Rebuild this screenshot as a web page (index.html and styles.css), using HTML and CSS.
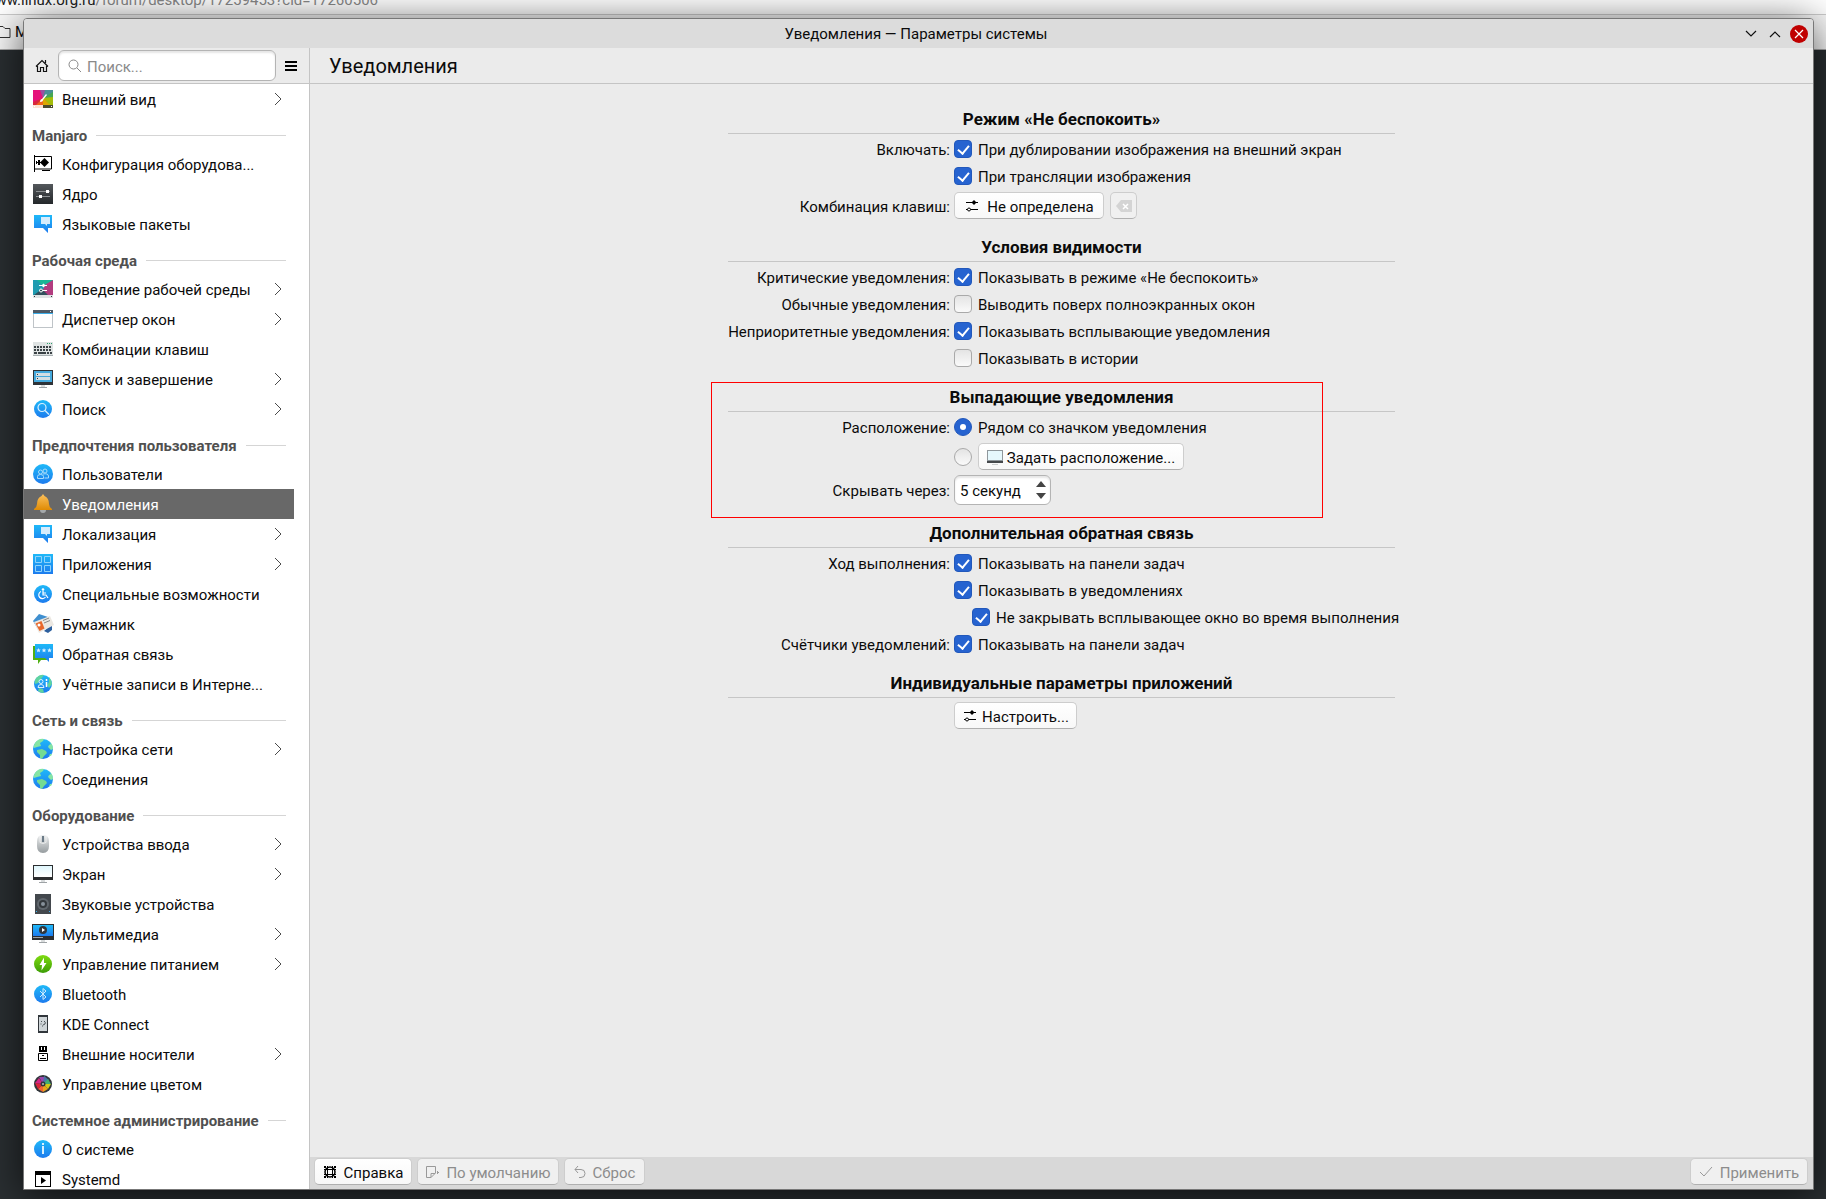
FILE: index.html
```html
<!DOCTYPE html>
<html lang="ru">
<head>
  <meta charset="utf-8">
  <title>Уведомления — Параметры системы</title>
  <meta name="viewport" content="width=device-width, initial-scale=1.0">
  <link rel="stylesheet" href="styles.css">
</head>
<body>

<!-- icon set -->
<svg class="sprite" aria-hidden="true">
  <defs>
    <linearGradient id="gBlue" x1="0" y1="0" x2="0" y2="1"><stop offset="0" stop-color="#1fb9f8"/><stop offset="1" stop-color="#1d7bee"/></linearGradient>
    <linearGradient id="gGreen" x1="0" y1="0" x2="0" y2="1"><stop offset="0" stop-color="#7fdc10"/><stop offset="1" stop-color="#3c9d07"/></linearGradient>
    <linearGradient id="gDark" x1="0" y1="0" x2="0" y2="1"><stop offset="0" stop-color="#54585c"/><stop offset="1" stop-color="#24282b"/></linearGradient>
    <linearGradient id="gBell" x1="0" y1="0" x2="0" y2="1"><stop offset="0" stop-color="#fbc05c"/><stop offset="1" stop-color="#e08b04"/></linearGradient>
    <linearGradient id="gGrey" x1="0" y1="0" x2="0" y2="1"><stop offset="0" stop-color="#eceeef"/><stop offset="1" stop-color="#969c9f"/></linearGradient>
    <linearGradient id="gScreen" x1="0" y1="0" x2="0" y2="1"><stop offset="0" stop-color="#dff6fc"/><stop offset="1" stop-color="#ffffff"/></linearGradient>
  </defs>
  <symbol id="i-look" viewBox="0 0 22 22">
    <path d="M1 2h20v15H1z" fill="#d8283c"/>
    <path d="M1 2h8l2 8L1 14z" fill="#e5127a"/>
    <path d="M8 2h6l-3 8z" fill="#9a4fa0"/>
    <path d="M13 2h8v3l-10 5z" fill="#4a8f96"/>
    <path d="M21 4v7l-10-1z" fill="#46a852"/>
    <path d="M21 9v8h-4l-6-7z" fill="#a4bd0a"/>
    <path d="M18 17h-8l1-7z" fill="#dca800"/>
    <path d="M11 17H4l7-7z" fill="#f0641c"/>
    <path d="M8 14c0-2 1-3 2-3l4-5 1 1-4 5c0 1-1 2-3 2z" fill="#fff"/>
    <path d="M1 17h10v3H1z" fill="#fbe3d3"/><path d="M11 17h10v3H11z" fill="#4a4b2e"/>
    <path d="M2 18h1v1H2zM19 18h1v1h-1z" fill="#fff"/>
  </symbol>
  <symbol id="i-hw" viewBox="0 0 22 22">
    <path d="M2.500 2v17M2 3.500h17.500v12.500H3M10 17.500h8" fill="none" stroke="#000"/>
    <path d="M4 9h6v1H4zM4 8h1v3H4zM6 7h2v5H6z"/>
    <path d="M8 9.500L12.500 5l4.500 4.500-4.500 4.500z"/>
  </symbol>
  <symbol id="i-kernel" viewBox="0 0 22 22">
    <path d="M1 1h20v20H1z" fill="url(#gDark)"/>
    <path d="M4 8.500h14M4 13.500h14" stroke="#8d9194"/>
    <path d="M14 7h3v3h-3zM7 12h3v3H7z" fill="#fff"/>
  </symbol>
  <symbol id="i-lang" viewBox="0 0 22 22">
    <path d="M2 2h18v13h-4v5l-5-5H2z" fill="url(#gBlue)"/>
    <path d="M9 4h9v7h-3v2l-2-2H9z" fill="#d6ecfc"/>
  </symbol>
  <symbol id="i-work" viewBox="0 0 22 22">
    <path d="M1 2h20v15H1z" fill="#1f9bb0"/><path d="M21 2v15H9l6-15z" fill="#b23c80"/>
    <path d="M5 2h16l-10 6z" fill="#1ab596"/><path d="M2 17l8-6 6 6z" fill="#32505c"/>
    <path d="M1 17h20v3H1z" fill="#dfe3e4"/><path d="M2 18h1v1H2zM19 18h1v1h-1z" fill="#31363b"/>
    <path d="M7 7.500h8M7 12.500h8" stroke="#fff"/><path d="M11.500 5.500l2 2-2 2-2-2z" fill="#fff"/><circle cx="9" cy="12.500" r="1.500" fill="#32505c" stroke="#fff"/>
  </symbol>
  <symbol id="i-win" viewBox="0 0 22 22">
    <path d="M1 2h20v18H1z" fill="#bfc4c8"/><path d="M2 5h18v14H2z" fill="#fff"/>
    <path d="M1 2h20v3H1z" fill="#4e5a66"/><path d="M1 5h20v1H1z" fill="#3daee9"/><path d="M18 3h1v1h-1z" fill="#fff"/>
  </symbol>
  <symbol id="i-keys" viewBox="0 0 22 22">
    <path d="M1 4h20v14H1z" fill="#dfe3e3"/>
    <path d="M2 9h18M2 12h18" stroke="#3b4246" stroke-width="2" stroke-dasharray="2 1"/>
    <path d="M2 15h18" stroke="#3b4246" stroke-width="2" stroke-dasharray="3 1 8 1 2 1"/>
    <path d="M15 5h1v1h-1zM17 5h1v1h-1zM19 5h1v1h-1z" fill="#2ea36c"/><path d="M1 17h20v1H1z" fill="#a9b0b2"/>
  </symbol>
  <symbol id="i-boot" viewBox="0 0 22 22">
    <path d="M1 2h20v15H1z" fill="#2e3338"/><path d="M2 3h18v11H2z" fill="#44a9dd"/>
    <path d="M4 5h14v3H4zM4 9h14v3H4z" fill="#d4dee3"/><path d="M5 6h1v1H5zM5 10h1v1H5z" fill="#2e3338"/>
    <path d="M9 17h4v2H9z" fill="#d9dcdd"/><path d="M7 19h8v1H7z" fill="#9ea3a6"/>
  </symbol>
  <symbol id="i-search" viewBox="0 0 22 22">
    <circle cx="11" cy="11" r="9" fill="url(#gBlue)"/>
    <circle cx="10" cy="9.500" r="4" fill="none" stroke="#d9f0fe" stroke-width="1.200"/><path d="M13 12.500l4 4" stroke="#d9f0fe" stroke-width="1.200"/>
  </symbol>
  <symbol id="i-users" viewBox="0 0 22 22">
    <circle cx="11" cy="11" r="10" fill="url(#gBlue)"/>
    <g fill="none" stroke="#a9dcfb"><circle cx="13" cy="8" r="2"/><circle cx="8.500" cy="9" r="2"/><path d="M5.500 15.500v-2q0-2 3-2t3 2v2zM11 11q5-1 5.500 2v2h-4"/></g>
  </symbol>
  <symbol id="i-bell" viewBox="0 0 22 22">
    <path d="M8 17h6q0 3-3 3t-3-3z" fill="#a5a9ab"/>
    <path d="M11 1l1.500 2Q17 5 17 11q0 3 3 5v1H2v-1q3-2 3-5 0-6 4.500-8z" fill="url(#gBell)"/>
  </symbol>
  <symbol id="i-apps" viewBox="0 0 22 22">
    <path d="M1 1h20v20H1z" fill="url(#gBlue)"/>
    <path d="M3.500 3.500h6v6h-6zM12.500 3.500h6v6h-6zM3.500 12.500h6v6h-6zM12.500 12.500h6v6h-6z" fill="none" stroke="#8fd3fb"/>
  </symbol>
  <symbol id="i-access" viewBox="0 0 22 22">
    <circle cx="11" cy="11" r="9" fill="url(#gBlue)"/>
    <circle cx="11" cy="6.500" r="1.300" fill="#fff"/>
    <path d="M11 8v4h3l2 3M11 10h3M9 8.500a3.700 3.700 0 1 0 4.500 5.500" fill="none" stroke="#fff" stroke-width="1.200"/>
  </symbol>
  <symbol id="i-wallet" viewBox="0 0 22 22">
    <path d="M1 8l6-7 9 3-9 14z" fill="#3f8fd0"/><path d="M12 18l8-7v6l-4 3z" fill="#2c5f9e"/>
    <path d="M2 9l16-6 4 9-15 8z" fill="#ece8e2"/><path d="M3.500 10.500l6-2.500 3 7.500-5 2.500z" fill="#e8682c"/>
    <circle cx="7" cy="12" r="1.500" fill="#fff"/><path d="M11 7.500l6-2.500M12 10l6-2.500" stroke="#888"/>
  </symbol>
  <symbol id="i-feedback" viewBox="0 0 22 22">
    <path d="M1 3h16v14H9l-3 4v-4H1z" fill="#4fb012"/>
    <path d="M3 1h18v14h-4v4l-4-4H3z" fill="url(#gBlue)"/>
    <path d="M6.500 5l.7 1.500 1.500.1-1.100 1.100.4 1.600-1.500-.8-1.500.8.4-1.600-1.100-1.100 1.500-.1zM12 5l.7 1.500 1.500.1-1.100 1.100.4 1.600-1.500-.8-1.500.8.4-1.600-1.100-1.100 1.500-.1zM17.500 5l.7 1.500 1.500.1-1.100 1.100.4 1.600-1.500-.8-1.500.8.4-1.600-1.100-1.100 1.500-.1z" fill="#d9f0fe"/>
  </symbol>
  <symbol id="i-accounts" viewBox="0 0 22 22">
    <circle cx="11" cy="11" r="9" fill="url(#gBlue)"/>
    <path d="M4 5q4-4 8-3l-3 4-3 4-3 1q-1-3 1-6zM17 4q3 3 3 7l-3 4-2-3 2-3zM7 15l4 1 1 4q-4 0-6-2z" fill="#5fd3a0"/>
    <circle cx="9" cy="8.500" r="2" fill="none" stroke="#d9f0fe"/><path d="M6 14.500q0-3 3-3t3 3z" fill="none" stroke="#d9f0fe"/><path d="M14.500 6v2M14.500 9v5" stroke="#fff" stroke-width="1.500"/>
  </symbol>
  <symbol id="i-globe" viewBox="0 0 22 22">
    <circle cx="11" cy="11" r="10" fill="url(#gBlue)"/>
    <path d="M3 5q4-5 9-4l-1 2-3 2 1 3-4 1-3 1q-1-2 1-5z" fill="#86e5a4"/>
    <path d="M5 12l5-1 4 2 1 2-3 3-2 3-2-1v-3l-3-3z" fill="#74dc93"/>
    <path d="M17 3q4 3 4 8l-2 1-3-3 1-2 2-1zM17 18l1-2 2 0-1 2z" fill="#86e5a4"/>
  </symbol>
  <symbol id="i-mouse" viewBox="0 0 22 22">
    <path d="M11 2q6 0 6 6v5q0 7-6 7t-6-7V8q0-6 6-6z" fill="url(#gGrey)"/>
    <path d="M8 2.500v7q3 2 6 0v-7" fill="none" stroke="#fafafa" stroke-width=".7"/><path d="M10 3h2v6h-2z" fill="#6b7a86"/>
  </symbol>
  <symbol id="i-screen" viewBox="0 0 22 22">
    <path d="M1 2h20v15H1z" fill="#2c2e30"/><path d="M2 3h18v11H2z" fill="url(#gScreen)"/>
    <path d="M9 17h4v2H9z" fill="#d9dcdd"/><path d="M7 19h8v1H7z" fill="#9ea3a6"/>
  </symbol>
  <symbol id="i-place" viewBox="0 0 16 16">
    <path d="M0 1h16v13H0z" fill="#8f979c"/><path d="M1 2h14v9H1z" fill="#e6f8fd"/><path d="M0 12h16v2H0z" fill="#44484b"/><path d="M5 15h6v1H5z" fill="#c9cccd"/>
  </symbol>
  <symbol id="i-sound" viewBox="0 0 22 22">
    <path d="M3 1h16v20H3z" fill="#43484d"/><path d="M4 18h1v1H4zM17 18h1v1h-1z" fill="#3daee9"/>
    <circle cx="11" cy="11" r="6" fill="#60676d"/><circle cx="11" cy="11" r="4" fill="#33383c"/><circle cx="11" cy="11" r="2" fill="#87919a"/>
  </symbol>
  <symbol id="i-media" viewBox="0 0 22 22">
    <path d="M0 1h22v16H0z" fill="#2c2e30"/><path d="M1 2h20v11H1z" fill="url(#gBlue)"/>
    <circle cx="11" cy="7" r="4" fill="#31363b"/><path d="M10 5v4l3-2z" fill="#fff"/><path d="M1 14h10v1H1z" fill="#9ea3a6"/>
    <path d="M9 17h4v2H9z" fill="#d9dcdd"/><path d="M7 19h8v1H7z" fill="#9ea3a6"/>
  </symbol>
  <symbol id="i-power" viewBox="0 0 22 22">
    <circle cx="11" cy="11" r="9" fill="url(#gGreen)"/><path d="M12 4.500L7.500 12H10l-.5 5.500L14.500 10H12z" fill="#fff"/>
  </symbol>
  <symbol id="i-bt" viewBox="0 0 22 22">
    <circle cx="11" cy="11" r="9" fill="url(#gBlue)"/><path d="M8 8l6 6-3 2.500v-11L14 8l-6 6" fill="none" stroke="#cfeafd"/>
  </symbol>
  <symbol id="i-phone" viewBox="0 0 22 22">
    <path d="M6 2h10v18H6z" fill="#31363b"/><path d="M7 4h8v14H7z" fill="#cfd5d8"/>
    <path d="M9 8.500h1M8.500 11h1M12 8q2 1 1 3l-2 1M10 13h1" fill="none" stroke="#4d5458"/>
  </symbol>
  <symbol id="i-usb" viewBox="0 0 22 22">
    <path d="M7 3h8v6H7z"/><path d="M9 4h1v3H9zM12 4h1v3h-1z" fill="#fff"/>
    <path d="M6.500 10.500h9v7h-9z" fill="#fff" stroke="#000"/><path d="M8 15h6v1H8zM10 12h2v1h-2z"/>
  </symbol>
  <symbol id="i-color" viewBox="0 0 22 22">
    <circle cx="11" cy="11" r="9" fill="#31363b"/>
    <path d="M11 11L7 4h6z" fill="#9b45ad"/><path d="M11 11l1-8 5 4z" fill="#4a73a8"/><path d="M11 11l5-5 3 5z" fill="#3fae70"/>
    <path d="M11 11h8l-3 5z" fill="#d0c818"/><path d="M11 11l5 5-5 3z" fill="#eaa31c"/><path d="M11 11v8l-5-3z" fill="#f06432"/><path d="M11 11l-5 5-3-6z" fill="#dc2339"/><path d="M11 11l-8-1 4-5z" fill="#d52684"/>
    <circle cx="11" cy="11" r="2.500" fill="#31363b"/><circle cx="11" cy="11" r="1" fill="#bbb"/>
  </symbol>
  <symbol id="i-info" viewBox="0 0 22 22">
    <circle cx="11" cy="11" r="9" fill="url(#gBlue)"/><path d="M10 5h2v2h-2zM10 8h2v8h-2z" fill="#d9f0fe"/>
  </symbol>
  <symbol id="i-systemd" viewBox="0 0 22 22">
    <path d="M3 3h16v16H3z"/><path d="M4 7h14v11H4z" fill="#fff"/><path d="M9 9v7l5-3.500z"/>
  </symbol>
  <symbol id="i-chev" viewBox="0 0 8 14"><path d="M1 1l6 6-6 6" fill="none" stroke="#4a4a4a"/></symbol>
  <symbol id="i-conf" viewBox="0 0 16 16">
    <path d="M2 4.500h12M2 11.500h12" stroke="#000"/><path d="M10 2l2.500 2.500L10 7 7.500 4.500z"/><circle cx="5" cy="11.500" r="1.500" fill="#fff" stroke="#000"/>
  </symbol>
</svg>

<!-- browser behind the window -->
<div class="backdrop" aria-hidden="true">
  <div class="url"><span>www.linux.org.ru<i>/forum/desktop/17259453?cid=17260506</i></span></div>
  <div class="bookmarks">
    <svg width="11" height="16" viewBox="0 0 11 16"><path d="M0 2.500h3l2 2h5v9H0" fill="none" stroke="#333"/></svg>
    <span>M</span>
  </div>
</div>

<div class="window">
  <header class="titlebar">
    <h1>Уведомления — Параметры системы</h1>
    <div class="wm">
      <button type="button" aria-label="Свернуть"><svg width="12" height="8" viewBox="0 0 12 8"><path d="M1 1l5 5 5-5" fill="none" stroke="#111" stroke-width="1.200"/></svg></button>
      <button type="button" aria-label="Развернуть"><svg width="12" height="8" viewBox="0 0 12 8"><path d="M1 7l5-5 5 5" fill="none" stroke="#111" stroke-width="1.200"/></svg></button>
      <button type="button" class="close" aria-label="Закрыть"><svg width="18" height="18" viewBox="0 0 18 18"><path d="M5 5l8 8M13 5l-8 8" stroke="#fff" stroke-width="1.200"/></svg></button>
    </div>
  </header>

  <div class="content">
    <aside class="sidebar">
      <div class="tools">
        <button type="button" class="flat" aria-label="Домой"><svg width="14" height="14" viewBox="0 0 14 14"><path d="M1 7.500l6-6 6 6M2.500 7v5.500h3v-4h3v4h3V7M10.500 1v3" fill="none" stroke="#111" stroke-width="1.200"/></svg></button>
        <label class="search">
          <svg width="14" height="14" viewBox="0 0 14 14"><circle cx="5.500" cy="5.500" r="4.500" fill="none" stroke="#888"/><path d="M9 9l4 4" stroke="#888"/></svg>
          <input type="search" placeholder="Поиск..." aria-label="Поиск">
        </label>
        <button type="button" class="flat" aria-label="Меню"><svg width="12" height="12" viewBox="0 0 12 12"><path d="M0 2h12M0 6h12M0 10h12" stroke="#000" stroke-width="2"/></svg></button>
      </div>

      <nav>
        <a class="item" href="#"><svg><use href="#i-look"/></svg><span>Внешний вид</span><svg class="chev"><use href="#i-chev"/></svg></a>

        <h2>Manjaro</h2>
        <a class="item" href="#"><svg><use href="#i-hw"/></svg><span>Конфигурация оборудова...</span></a>
        <a class="item" href="#"><svg><use href="#i-kernel"/></svg><span>Ядро</span></a>
        <a class="item" href="#"><svg><use href="#i-lang"/></svg><span>Языковые пакеты</span></a>

        <h2>Рабочая среда</h2>
        <a class="item" href="#"><svg><use href="#i-work"/></svg><span>Поведение рабочей среды</span><svg class="chev"><use href="#i-chev"/></svg></a>
        <a class="item" href="#"><svg><use href="#i-win"/></svg><span>Диспетчер окон</span><svg class="chev"><use href="#i-chev"/></svg></a>
        <a class="item" href="#"><svg><use href="#i-keys"/></svg><span>Комбинации клавиш</span></a>
        <a class="item" href="#"><svg><use href="#i-boot"/></svg><span>Запуск и завершение</span><svg class="chev"><use href="#i-chev"/></svg></a>
        <a class="item" href="#"><svg><use href="#i-search"/></svg><span>Поиск</span><svg class="chev"><use href="#i-chev"/></svg></a>

        <h2>Предпочтения пользователя</h2>
        <a class="item" href="#"><svg><use href="#i-users"/></svg><span>Пользователи</span></a>
        <a class="item active" href="#" aria-current="page"><svg><use href="#i-bell"/></svg><span>Уведомления</span></a>
        <a class="item" href="#"><svg><use href="#i-lang"/></svg><span>Локализация</span><svg class="chev"><use href="#i-chev"/></svg></a>
        <a class="item" href="#"><svg><use href="#i-apps"/></svg><span>Приложения</span><svg class="chev"><use href="#i-chev"/></svg></a>
        <a class="item" href="#"><svg><use href="#i-access"/></svg><span>Специальные возможности</span></a>
        <a class="item" href="#"><svg><use href="#i-wallet"/></svg><span>Бумажник</span></a>
        <a class="item" href="#"><svg><use href="#i-feedback"/></svg><span>Обратная связь</span></a>
        <a class="item" href="#"><svg><use href="#i-accounts"/></svg><span>Учётные записи в Интерне...</span></a>

        <h2>Сеть и связь</h2>
        <a class="item" href="#"><svg><use href="#i-globe"/></svg><span>Настройка сети</span><svg class="chev"><use href="#i-chev"/></svg></a>
        <a class="item" href="#"><svg><use href="#i-globe"/></svg><span>Соединения</span></a>

        <h2>Оборудование</h2>
        <a class="item" href="#"><svg><use href="#i-mouse"/></svg><span>Устройства ввода</span><svg class="chev"><use href="#i-chev"/></svg></a>
        <a class="item" href="#"><svg><use href="#i-screen"/></svg><span>Экран</span><svg class="chev"><use href="#i-chev"/></svg></a>
        <a class="item" href="#"><svg><use href="#i-sound"/></svg><span>Звуковые устройства</span></a>
        <a class="item" href="#"><svg><use href="#i-media"/></svg><span>Мультимедиа</span><svg class="chev"><use href="#i-chev"/></svg></a>
        <a class="item" href="#"><svg><use href="#i-power"/></svg><span>Управление питанием</span><svg class="chev"><use href="#i-chev"/></svg></a>
        <a class="item" href="#"><svg><use href="#i-bt"/></svg><span>Bluetooth</span></a>
        <a class="item" href="#"><svg><use href="#i-phone"/></svg><span>KDE Connect</span></a>
        <a class="item" href="#"><svg><use href="#i-usb"/></svg><span>Внешние носители</span><svg class="chev"><use href="#i-chev"/></svg></a>
        <a class="item" href="#"><svg><use href="#i-color"/></svg><span>Управление цветом</span></a>

        <h2>Системное администрирование</h2>
        <a class="item" href="#"><svg><use href="#i-info"/></svg><span>О системе</span></a>
        <a class="item" href="#"><svg><use href="#i-systemd"/></svg><span>Systemd</span></a>
      </nav>
    </aside>

    <main class="page">
      <div class="page-title"><h2>Уведомления</h2></div>

      <form class="form">
        <h3>Режим «Не беспокоить»</h3>
        <div class="row">
          <span class="name">Включать:</span>
          <label><input type="checkbox" checked><span>При дублировании изображения на внешний экран</span></label>
        </div>
        <div class="row">
          <label><input type="checkbox" checked><span>При трансляции изображения</span></label>
        </div>
        <div class="row">
          <span class="name">Комбинация клавиш:</span>
          <div class="group">
            <button type="button" class="btn keys"><svg width="16" height="16"><use href="#i-conf"/></svg><span>Не определена</span></button>
            <button type="button" class="btn clear" disabled aria-label="Очистить"><svg width="16" height="12" viewBox="0 0 16 12"><path d="M5 0h11v12H5L0 6z" fill="#d4d4d4"/><path d="M7 4l5 5M12 4L7 9" stroke="#fff" stroke-width="1.500"/></svg></button>
          </div>
        </div>

        <h3>Условия видимости</h3>
        <div class="row">
          <span class="name">Критические уведомления:</span>
          <label><input type="checkbox" checked><span>Показывать в режиме «Не беспокоить»</span></label>
        </div>
        <div class="row">
          <span class="name">Обычные уведомления:</span>
          <label><input type="checkbox"><span>Выводить поверх полноэкранных окон</span></label>
        </div>
        <div class="row">
          <span class="name">Неприоритетные уведомления:</span>
          <label><input type="checkbox" checked><span>Показывать всплывающие уведомления</span></label>
        </div>
        <div class="row">
          <label><input type="checkbox"><span>Показывать в истории</span></label>
        </div>

        <section class="popups">
          <h3>Выпадающие уведомления</h3>
          <div class="row">
            <span class="name">Расположение:</span>
            <label><input type="radio" name="pos" checked><span>Рядом со значком уведомления</span></label>
          </div>
          <div class="row">
            <div class="group">
              <input type="radio" name="pos" aria-label="Задать расположение">
              <button type="button" class="btn place"><svg width="16" height="16"><use href="#i-place"/></svg><span>Задать расположение...</span></button>
            </div>
          </div>
          <div class="row">
            <label class="name" for="hide">Скрывать через:</label>
            <div class="spin">
              <input type="text" id="hide" value="5 секунд">
              <div class="steps">
                <button type="button" aria-label="Больше"><svg width="12" height="8" viewBox="0 0 12 8"><path d="M6 1l5 6H1z" fill="#444"/></svg></button>
                <button type="button" aria-label="Меньше"><svg width="12" height="8" viewBox="0 0 12 8"><path d="M6 7l5-6H1z" fill="#444"/></svg></button>
              </div>
            </div>
          </div>
          <div class="marker"></div>
        </section>

        <h3>Дополнительная обратная связь</h3>
        <div class="row">
          <span class="name">Ход выполнения:</span>
          <label><input type="checkbox" checked><span>Показывать на панели задач</span></label>
        </div>
        <div class="row">
          <label><input type="checkbox" checked><span>Показывать в уведомлениях</span></label>
        </div>
        <div class="row">
          <label class="nested"><input type="checkbox" checked><span>Не закрывать всплывающее окно во время выполнения</span></label>
        </div>
        <div class="row">
          <span class="name">Счётчики уведомлений:</span>
          <label><input type="checkbox" checked><span>Показывать на панели задач</span></label>
        </div>

        <h3>Индивидуальные параметры приложений</h3>
        <div class="row">
          <div class="group"><button type="button" class="btn setup"><svg width="16" height="16"><use href="#i-conf"/></svg><span>Настроить...</span></button></div>
        </div>
      </form>

      <footer class="actions">
        <button type="button" class="btn help"><svg width="14" height="14" viewBox="0 0 14 14"><circle cx="7" cy="7" r="5" fill="none" stroke="#000" stroke-width="1.500"/><path d="M4.500 1v12M9.500 1v12M1 4.500h12M1 9.500h12" stroke="#000"/><path d="M1 1h2v2H1zM11 1h2v2h-2zM1 11h2v2H1zM11 11h2v2h-2z"/></svg><span>Справка</span></button>
        <button type="button" class="btn defaults" disabled><svg width="14" height="14" viewBox="0 0 14 14"><path d="M6 12.500H1.500v-11h9V8L6 12.500V8.500h4M12 7.500h2M12.500 6v3" fill="none" stroke="#999"/></svg><span>По умолчанию</span></button>
        <button type="button" class="btn reset" disabled><svg width="12" height="14" viewBox="0 0 12 14"><path d="M4 1L1 4.500 4 8M1 4.500h6q4 0 4 4t-4 4H5" fill="none" stroke="#999"/></svg><span>Сброс</span></button>
        <button type="button" class="btn apply" disabled><svg width="14" height="12" viewBox="0 0 14 12"><path d="M1 6l4 4 8-9" fill="none" stroke="#999"/></svg><span>Применить</span></button>
      </footer>
    </main>
  </div>
</div>

</body>
</html>
```
FILE: styles.css
```css
* {
  box-sizing: border-box;
}
body {
  margin: 0;
  height: 100vh;
  padding: 18px 12px 9px 23px;
  overflow: hidden;
  background: #2a2f32;
  color: #0b0b0b;
  font: 15px/20px Roboto, "Noto Sans", sans-serif;
}
h1, h2, h3 {
  margin: 0;
}
button, input {
  font: inherit;
  color: inherit;
}
button {
  padding: 0;
  border: none;
  background: none;
}
svg {
  display: block;
  flex: none;
}
.sprite {
  position: absolute;
  width: 0;
  height: 0;
}

/* browser */
.backdrop {
  position: absolute;
  inset: 0 0 auto 0;
  background: #fff;
}
.url {
  display: flex;
  align-items: flex-end;
  height: 15px;
  overflow: hidden;
  border-bottom: 1px solid #ccc;
  color: #222;
  white-space: nowrap;
}
.url span {
  display: flex;
  justify-content: flex-end;
  width: 378px;
  padding-bottom: 4px;
}
.url i {
  font-style: normal;
  color: #888;
}
.bookmarks {
  display: flex;
  align-items: center;
  gap: 4px;
  height: 35px;
  border-bottom: 1px solid #aaa;
  background: #f8f8f8;
}

/* window */
.window {
  position: relative;
  display: flex;
  flex-direction: column;
  height: 100%;
  border: 1px solid #777;
  border-radius: 4px 4px 0 0;
  overflow: hidden;
  background: #ebebeb;
  box-shadow: 0 6px 40px rgba(0, 0, 0, .7);
}
.titlebar {
  display: grid;
  grid-template-columns: 1fr auto 1fr;
  align-items: center;
  flex: none;
  height: 29px;
  padding-right: 5px;
  background: #dcdcdc;
}
.titlebar h1 {
  grid-column: 2;
  font-size: 15px;
  font-weight: 400;
}
.wm {
  display: flex;
  align-items: center;
  justify-content: flex-end;
  gap: 12px;
}
.close {
  margin-left: -3px;
  border-radius: 50%;
  background: #c00000;
}
.content {
  display: flex;
  flex: 1;
  min-height: 0;
}

/* sidebar */
.sidebar {
  display: flex;
  flex-direction: column;
  flex: none;
  width: 286px;
  border-right: 1px solid #c4c4c4;
  background: #fff;
}
.tools {
  display: flex;
  align-items: center;
  gap: 9px;
  flex: none;
  height: 36px;
  padding: 0 12px 0 11px;
  border-bottom: 1px solid #c4c4c4;
  background: #ebebeb;
}
.search {
  display: flex;
  align-items: center;
  gap: 5px;
  flex: 1;
  height: 31px;
  padding: 0 9px;
  border: 1px solid #b4b4b4;
  border-radius: 6px;
  background: #fff;
  box-shadow: inset 0 2px 2px rgba(0, 0, 0, .1);
}
.search input {
  width: 100%;
  min-width: 0;
  padding: 2px 0 0;
  border: none;
  outline: none;
  background: none;
}
.search input::placeholder {
  color: #8a8a8a;
}
nav {
  flex: 1;
  min-height: 0;
  overflow: hidden;
}
nav h2 {
  display: flex;
  align-items: center;
  gap: 9px;
  height: 35px;
  padding: 8px 23px 0 8px;
  font-size: 15px;
  color: #505050;
  white-space: nowrap;
}
nav h2::after {
  content: "";
  flex: 1;
  height: 1px;
  background: #d5d5d5;
}
.item {
  display: flex;
  align-items: center;
  gap: 8px;
  height: 30px;
  margin-right: 15px;
  padding: 0 12px 0 8px;
  color: inherit;
  text-decoration: none;
  white-space: nowrap;
}
.item svg {
  width: 22px;
  height: 22px;
}
.item span {
  flex: 1;
}
/* optical centring of text next to icons and boxes */
.item span, .row span, .row .name, .btn span {
  padding-top: 2px;
}
.item .chev {
  width: 8px;
  height: 14px;
}
.item.active {
  background: #686868;
  color: #fff;
}

/* page */
.page {
  display: flex;
  flex-direction: column;
  flex: 1;
  min-width: 0;
}
.page-title {
  display: flex;
  align-items: center;
  flex: none;
  height: 36px;
  padding: 0 19px;
  border-bottom: 1px solid #c4c4c4;
}
.page-title h2 {
  font-size: 20px;
  font-weight: 400;
}
.form {
  display: flex;
  flex-direction: column;
  gap: 5px;
  flex: 1;
  min-height: 0;
  width: 667px;
  margin: 0 auto;
  padding-top: 12px;
}
.form h3 {
  padding: 13px 0 4px;
  margin-bottom: -1px;
  border-bottom: 1px solid #c6c6c6;
  font-size: 17px;
  text-align: center;
}
.row {
  display: grid;
  grid-template-columns: 222px 1fr;
  align-items: center;
  column-gap: 4px;
  min-height: 22px;
  white-space: nowrap;
}
.row > * {
  grid-column: 2;
}
.row .name {
  grid-column: 1;
  justify-self: end;
}
.row label:not(.name), .group {
  display: flex;
  align-items: center;
}
.row .nested {
  margin-left: 18px;
}
.group {
  gap: 6px;
}
input[type=checkbox], input[type=radio] {
  appearance: none;
  flex: none;
  display: grid;
  place-content: center;
  width: 18px;
  height: 18px;
  margin: 0 6px 0 0;
  border: 1px solid #a9a9a9;
  border-radius: 4px;
  background: linear-gradient(#e4e4e4, #fafafa);
}
input[type=radio] {
  border-radius: 50%;
}
input[type=checkbox]:checked, input[type=radio]:checked {
  border-color: #2258bb;
  background: #2663d0;
}
input[type=checkbox]:checked::before {
  content: "";
  width: 5px;
  height: 9px;
  margin-bottom: 2px;
  border: solid #fff;
  border-width: 0 2px 2px 0;
  transform: rotate(40deg);
}
input[type=radio]:checked::before {
  content: "";
  width: 6px;
  height: 6px;
  border-radius: 50%;
  background: #fff;
}
.group input[type=radio] {
  margin-right: 0;
}
.btn {
  display: flex;
  align-items: center;
  justify-content: center;
  gap: 7px;
  height: 27px;
  border: 1px solid #cdcdcd;
  border-bottom-color: #b0b0b0;
  border-radius: 5px;
  background: linear-gradient(#fff, #f8f8f8);
  white-space: nowrap;
}
.btn:disabled {
  background: #f0f0f0;
  color: #8c8c8c;
}
.keys {
  width: 150px;
  gap: 7px;
}
.clear {
  width: 27px;
}
.place {
  width: 206px;
  gap: 4px;
}
.setup {
  width: 123px;
  gap: 4px;
}
.spin {
  display: flex;
  align-items: center;
  width: 97px;
  height: 30px;
  padding: 0 3px 0 5px;
  border: 1px solid #b4b4b4;
  border-radius: 6px;
  background: #fff;
  box-shadow: inset 0 2px 2px rgba(0, 0, 0, .1);
}
.spin input {
  flex: 1;
  min-width: 0;
  padding: 2px 0 0;
  border: none;
  outline: none;
  background: none;
}
.steps {
  display: flex;
  flex-direction: column;
  gap: 4px;
}
.popups {
  position: relative;
  display: flex;
  flex-direction: column;
  gap: 5px;
}
.marker {
  position: absolute;
  inset: 8px 72px -13px -17px;
  border: 1px solid #f00;
  pointer-events: none;
}
.actions {
  display: flex;
  align-items: flex-start;
  gap: 5px;
  flex: none;
  height: 32px;
  padding: 1px 5px 0 4px;
  background: #d8d8d8;
}
.help {
  width: 98px;
}
.defaults {
  width: 142px;
}
.reset {
  width: 81px;
}
.apply {
  width: 118px;
  margin-left: auto;
}
```
